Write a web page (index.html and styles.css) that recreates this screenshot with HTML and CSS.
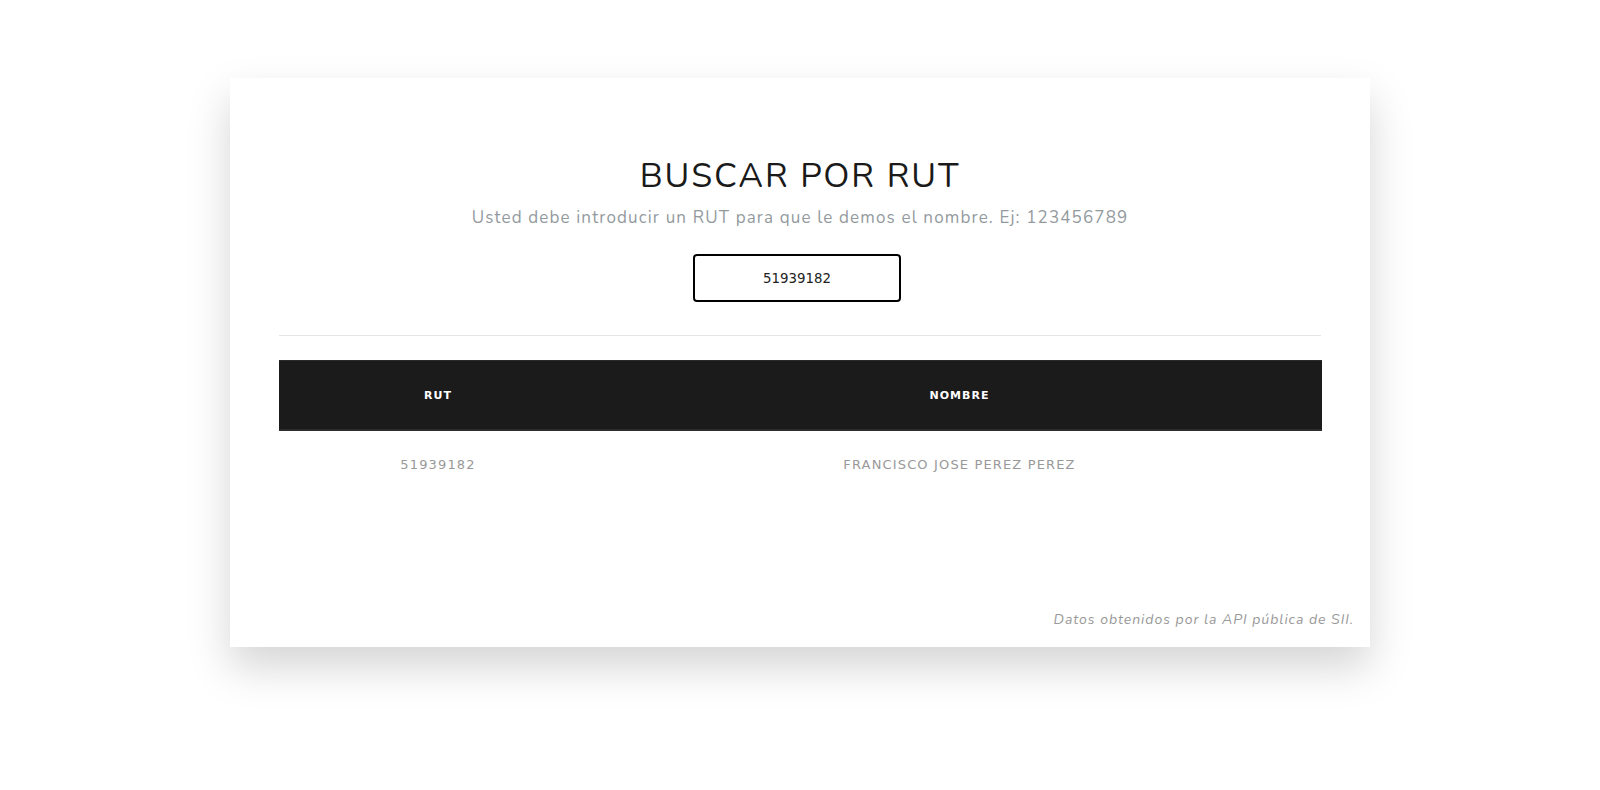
FILE: index.html
```html
<!DOCTYPE html>
<html lang="es">
<head>
    <meta charset="UTF-8">
    <meta name="viewport" content="width=device-width, initial-scale=1.0">
    <title>Buscar por RUT</title>
    <link rel="stylesheet" href="styles.css">
</head>
<body>

    <div class="search-card">
        <!-- Buscador -->
        <div class="search-header">
            <h1>BUSCAR POR RUT</h1>
            <p class="subtitle">Usted debe introducir un RUT para que le demos el nombre. Ej: 123456789</p>
            <input type="text" class="rut-input" value="51939182">
        </div>

        <hr class="divider">

        <!-- Resultados -->
        <table class="result-table">
            <thead>
                <tr>
                    <th class="col-rut">RUT</th>
                    <th>NOMBRE</th>
                </tr>
            </thead>
            <tbody>
                <tr>
                    <td>51939182</td>
                    <td>FRANCISCO JOSE PEREZ PEREZ</td>
                </tr>
            </tbody>
        </table>

        <p class="source-note">Datos obtenidos por la API pública de SII.</p>
    </div>

</body>
</html>
```

FILE: styles.css
```css
body {
    margin: 0;
    padding: 78px 0 0;
    min-height: 100vh;
    box-sizing: border-box;
    background-color: #fff;
    font-family: "Nunito", "Lato", sans-serif;
}
.search-card {
    width: 1140px;
    margin: 0 auto;
    padding: 78px 48px 17px;
    box-sizing: border-box;
    background-color: #fff;
    box-shadow: 0 20px 40px rgba(0, 0, 0, 0.17);
}
.search-header {
    text-align: center;
}
h1 {
    margin: 0;
    font-size: 34px;
    font-weight: 400;
    line-height: 1.2;
    letter-spacing: 1.9px;
    color: #1a1a1a;
}
.subtitle {
    margin: 8px 0 0;
    font-size: 17px;
    line-height: 1.5;
    letter-spacing: 1.15px;
    color: #939a9e;
}
.rut-input {
    display: block;
    width: 208px;
    height: 48px;
    margin: 24px 0 0 calc(50% - 107px);
    box-sizing: border-box;
    border: 2px solid #000;
    border-radius: 4px;
    font-family: "DejaVu Sans", sans-serif;
    font-size: 13.33px;
    text-align: center;
    color: #222;
    outline: none;
}
.divider {
    margin: 33px 1px 0;
    border: none;
    border-top: 1px solid #e5e5e5;
}
.result-table {
    width: 1043px;
    margin: 24px 0 0 1px;
    border-collapse: collapse;
    font-family: "DejaVu Sans", sans-serif;
}
.result-table th {
    height: 69px;
    padding: 0;
    box-sizing: border-box;
    background-color: #1b1b1b;
    border-top: 1px solid #2a2a2a;
    border-bottom: 2px solid #2c2c2c;
    font-size: 11px;
    font-weight: bold;
    letter-spacing: 1px;
    color: #fff;
    text-align: center;
}
.result-table .col-rut {
    width: 318px;
}
.result-table td {
    padding: 24px 0;
    line-height: 20px;
    font-size: 13px;
    letter-spacing: 1.15px;
    color: #999;
    text-align: center;
}
.source-note {
    margin: 111px -32px 0 0;
    font-size: 14px;
    font-style: italic;
    line-height: 20px;
    letter-spacing: 0.97px;
    color: #999;
    text-align: right;
}
```
